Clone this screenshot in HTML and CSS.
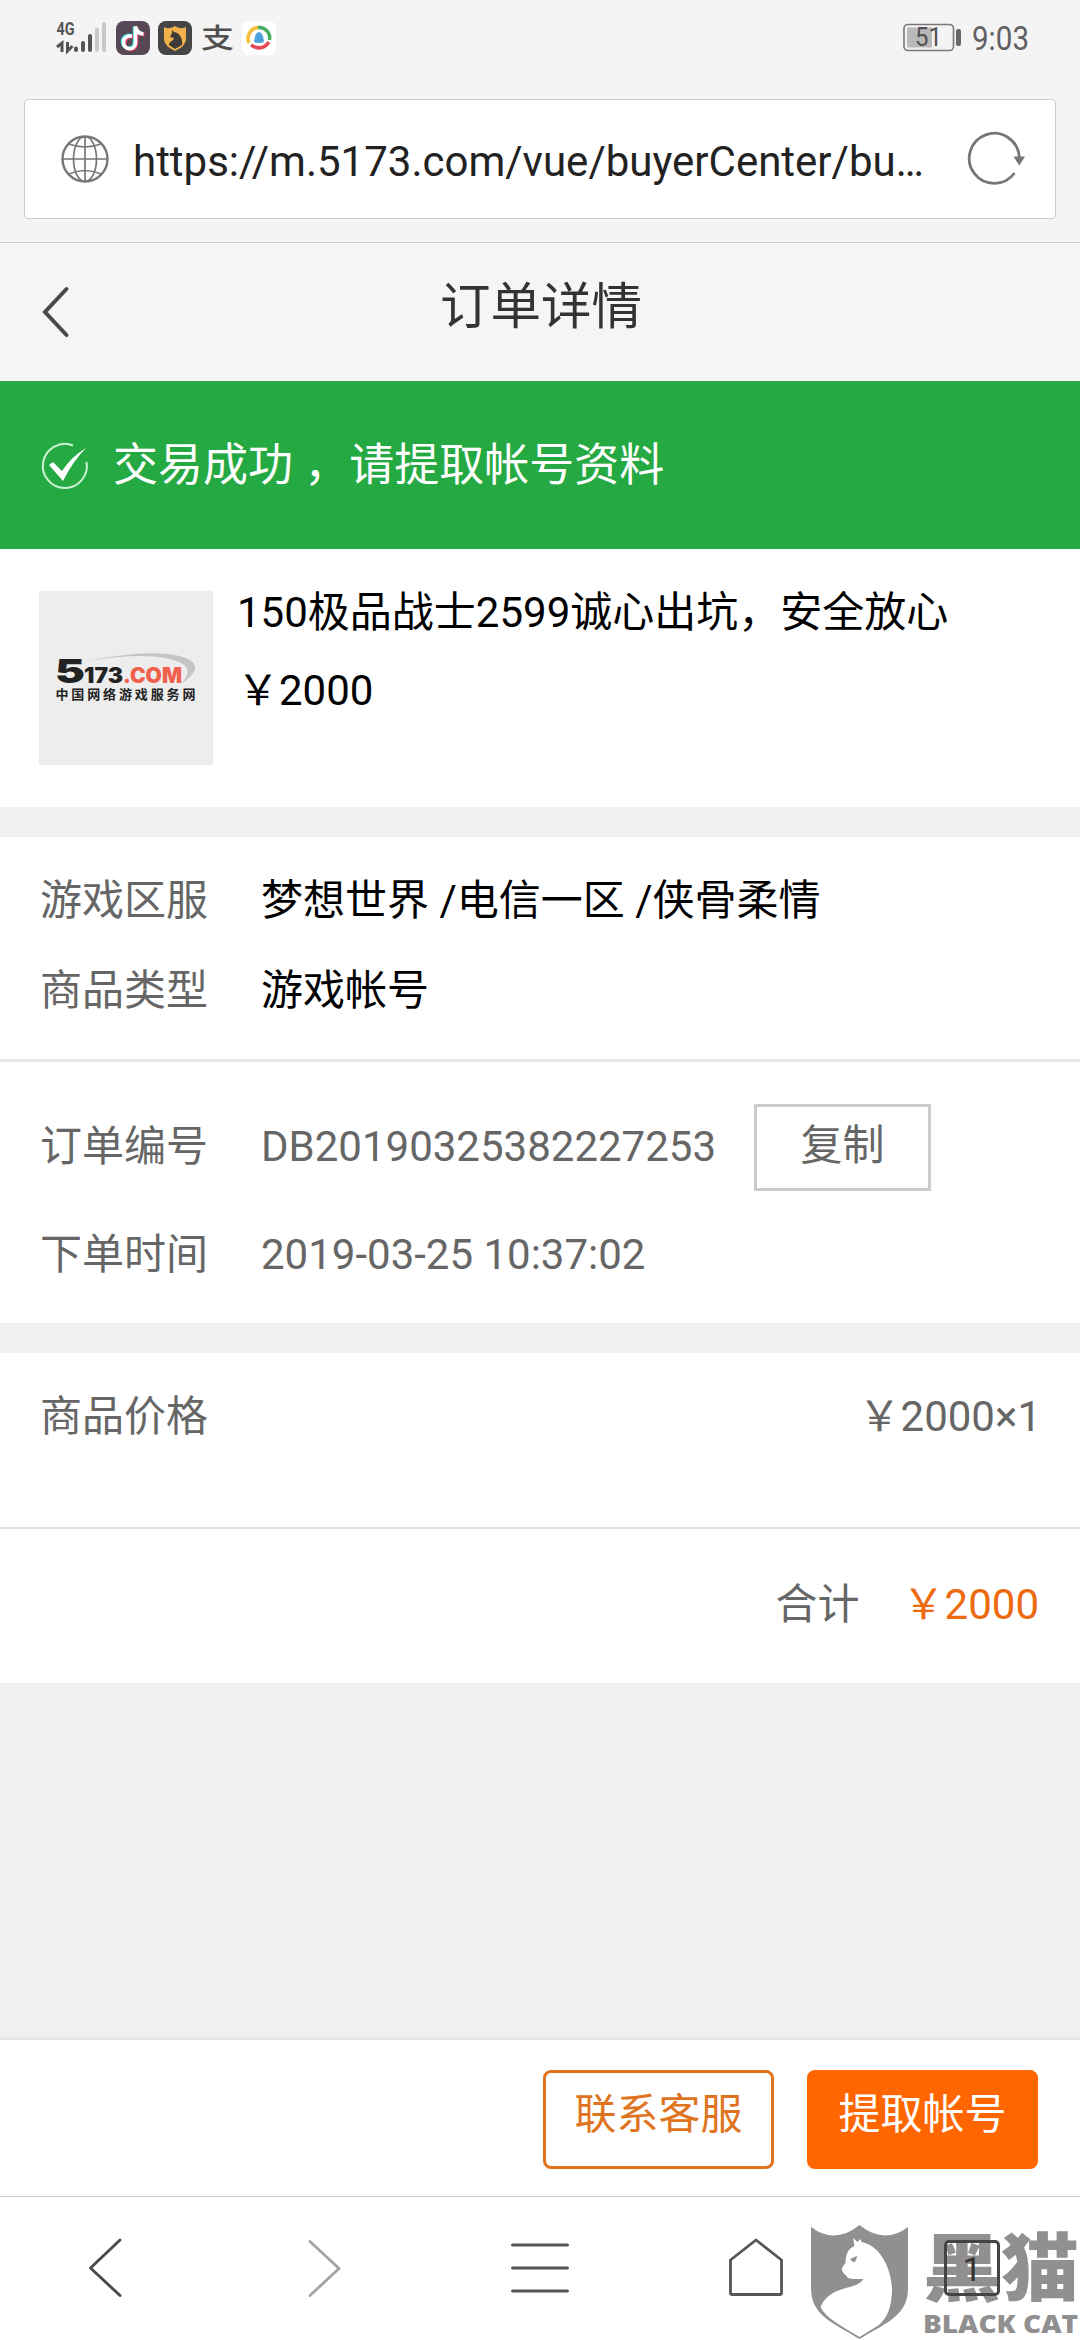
FILE: index.html
```html
<!DOCTYPE html>
<html lang="zh-CN">
<head>
<meta charset="utf-8">
<title>订单详情</title>
<link rel="stylesheet" href="styles.css">
</head>
<body>
<div class="screen">
  <div class="status">
    <div class="status-left">
      <svg class="signal" width="52" height="34" viewBox="56 21 52 34">
        <text x="56.500" y="35" class="net" textLength="18" lengthAdjust="spacingAndGlyphs">4G</text>
        <g fill="none" stroke="#555" stroke-width="3"><path d="M57 47l5-4v9M67.500 42v9l5-5"/></g>
        <g stroke-width="4" stroke-linecap="round"><path stroke="#555" d="M76 48.500v1.500M83 43v7M90 36v14"/><path stroke="#c8c8c8" d="M97 29.500v20.500M104 24v26"/></g>
      </svg>
      <svg class="app" viewBox="0 0 34 34"><rect width="34" height="34" rx="8" fill="#574855"/><g fill="none" stroke-width="3.600"><path stroke="#38dfe2" d="M15 14.500c-5-1-8.500 2-8.500 6s3 6.500 6 6.500 6-2 6-6V5.500c1 4.500 3.500 6.500 8 6.800"/><path stroke="#f0406a" d="M17 16c-5-1-8.500 2-8.500 6s3 6.500 6 6.500 6-2 6-6V7c1 4.500 3.500 6.500 8 6.800"/><path stroke="#fff" d="M16 15.200c-5-1-8.500 2-8.500 6s3 6.500 6 6.500 6-2 6-6V5.500c1 4.500 3.500 7.300 8 7.500"/></g></svg>
      <svg class="app" viewBox="0 0 34 34"><rect width="34" height="34" rx="8" fill="#454545"/><path fill="#f2b04a" d="M6 6q5 3 11-1 6 4 11 1v12q0 7-11 12Q6 25 6 18z"/><path fill="#3d3a38" d="M14 9l2 2c6 1 9 7 8 13l-7 4-6-4c0-4 5-4 5-7l-4-1 2-4z"/></svg>
      <svg class="pay" width="34" height="34" viewBox="0 0 34 34"><text x="1" y="27" class="zhi" textLength="33" lengthAdjust="spacingAndGlyphs">支</text></svg>
      <svg class="app" viewBox="0 0 34 34"><rect width="34" height="34" rx="7" fill="#fff"/><g fill="none" stroke-width="3.500"><path stroke="#f5bf38" d="M7 22A11 11 0 0 1 16 6.500"/><path stroke="#48ad5c" d="M16 6.500A10.500 10.500 0 0 1 27.500 19"/><path stroke="#e64857" d="M27 21Q20 31 9 24"/></g><path fill="#4aa3dc" d="M12 21q1-10 5-10t5 10q-5 2-10 0z"/></svg>
    </div>
    <svg class="status-right" width="128" height="34" viewBox="900 20 128 34">
      <rect x="903" y="24.500" width="49.500" height="26" rx="4" fill="none" stroke="#777" stroke-width="1.600"/>
      <rect x="906" y="27.500" width="25" height="20" fill="#b9b9b9"/>
      <rect x="955" y="29" width="5" height="17" rx="2" fill="#666"/>
      <text class="pct" x="914" y="46" textLength="27" lengthAdjust="spacingAndGlyphs">51</text>
      <text class="clock" x="971" y="50" textLength="57" lengthAdjust="spacingAndGlyphs">9:03</text>
    </svg>
  </div>
  <div class="address">
    <div class="urlbox">
      <svg width="48" height="48" viewBox="0 0 48 48" fill="none" stroke="#777" stroke-width="1.700"><circle cx="24" cy="24" r="22.500" stroke-width="2.400"/><ellipse cx="24" cy="24" rx="11.500" ry="22.500"/><path d="M24 1.500v45M1.500 24h45M8 9q16 6 32 0M8 39q16-7 32 0"/></svg>
      <span class="url">https://m.5173.com/vue/buyerCenter/bu…</span>
      <svg class="reload" width="58" height="56" viewBox="0 0 58 56"><path d="M46.500 42A25 25 0 1 1 51.200 26" fill="none" stroke="#777" stroke-width="2.800"/><path d="M45.500 25.500h11.500l-5.700 9z" fill="#777"/></svg>
    </div>
  </div>
  <header class="titlebar">
    <svg class="back" width="30" height="52" viewBox="0 0 30 52"><path d="M25.500 3L4 26l21.500 23" fill="none" stroke="#4a4a4a" stroke-width="4" stroke-linecap="round"/></svg>
    <h1>订单详情</h1>
  </header>
  <div class="success">
    <svg width="48" height="48" viewBox="0 0 48 48"><g fill="none" stroke="#cdf3d2" stroke-width="2"><path d="M32 3.500A22 22 0 1 0 45.500 20"/></g><path fill="#fff" d="M8 23l4-3 9 9Q31 14 45 6 32 19 22 39z"/></svg>
    <span>交易成功 ，请提取帐号资料</span>
  </div>
  <section class="product">
    <svg class="thumb" width="174" height="174" viewBox="0 0 174 174">
      <rect width="174" height="174" fill="#ededed"/>
      <path fill="#c5c5c5" d="M48 70Q98 60 128 63c33 4 36 15 14 30 13-14 6-22-16-26q-28-5-78 3z"/>
      <text x="16" y="92" class="brand five" textLength="30" lengthAdjust="spacingAndGlyphs">5</text>
      <text x="45" y="92" class="brand" textLength="39" lengthAdjust="spacingAndGlyphs">173</text>
      <text x="84" y="92" class="brand com" textLength="59" lengthAdjust="spacingAndGlyphs">.COM</text>
      <text x="16.500" y="107.500" class="tagline" textLength="140">中国网络游戏服务网</text>
    </svg>
    <div class="product-text"><div>150极品战士2599诚心出坑，安全放心</div><div>￥2000</div></div>
  </section>
  <section class="game">
    <div class="row"><span class="label">游戏区服</span><span class="strong">梦想世界 /电信一区 /侠骨柔情</span></div>
    <div class="row"><span class="label">商品类型</span><span class="strong">游戏帐号</span></div>
  </section>
  <section class="order">
    <div class="row number"><span class="label">订单编号</span><span>DB20190325382227253</span><button class="copy">复制</button></div>
    <div class="row"><span class="label">下单时间</span><span>2019-03-25 10:37:02</span></div>
  </section>
  <section class="price"><span>商品价格</span><span>￥2000×1</span></section>
  <section class="total"><span>合计</span><span class="amount">￥2000</span></section>
  <div class="actions"><button class="contact">联系客服</button><button class="extract">提取帐号</button></div>
  <nav class="nav">
    <span class="cell"><svg width="56" height="64" viewBox="0 0 56 64"><path d="M40 4L10.500 32L40 59.500" fill="none" stroke="#4a4a4a" stroke-width="2.900" stroke-linecap="round" stroke-linejoin="round"/></svg></span>
    <span class="cell"><svg width="56" height="64" viewBox="0 0 56 64"><path d="M14 5.500L43 32.500L14 59.500" fill="none" stroke="#a3a3a3" stroke-width="2.800" stroke-linecap="round" stroke-linejoin="round"/></svg></span>
    <span class="cell"><svg width="60" height="64" viewBox="0 0 60 64"><path d="M2.500 9h55M2.500 32h55M2.500 55h55" stroke="#555" stroke-width="3" stroke-linecap="round"/></svg></span>
    <span class="cell"><svg width="58" height="64" viewBox="0 0 58 64"><path d="M3.500 24L29 4l25.500 20v33.500q0 1-1 1h-49q-1 0-1-1z" fill="none" stroke="#555" stroke-width="2.800" stroke-linejoin="round"/></svg></span>
    <span class="cell"><span class="tabs">1</span></span>
    <svg class="watermark" width="270" height="120" viewBox="810 2220 270 120">
      <path fill="#918f90" d="M811 2227q24 18 48.500-2 25 20 48.500 2v61c0 27-20 34-48.500 51-28-17-48.500-24-48.500-51z"/>
      <path fill="#fff" d="M853 2238l4.500 4 3-3 1 3c21 4 31 31 30.500 50-1 17-5 26-13 33l-19.500 12c-18-11-34-19-39-30 10-23 36-16 43-28-8 0-15 1-17-3-6-5-6-7-1-13 0-12 5-15 9-17z"/>
      <path fill="#918f90" d="M850 2259l7-3q-1 7-4 6z"/>
      <text class="wm-cn" x="923" y="2295" textLength="156" lengthAdjust="spacingAndGlyphs">黑猫</text>
      <text class="wm-en" x="923" y="2333" textLength="155" lengthAdjust="spacingAndGlyphs">BLACK CAT</text>
    </svg>
  </nav>
</div>
</body>
</html>
```
FILE: styles.css
```css
* { box-sizing: border-box; }
body { margin: 0; background: #f0f0f0; }
.screen {
  width: 1080px; height: 2340px; overflow: hidden;
  display: flex; flex-direction: column;
  font-family: Roboto, "Noto Sans CJK SC", sans-serif;
  font-size: 42px; line-height: 90px; color: #666; background: #f0f0f0;
}
.screen > * { flex-shrink: 0; }
svg { display: block; flex-shrink: 0; overflow: visible; }
button { font: inherit; padding: 0; background: #fff; }
section { background: #fff; }

.status {
  height: 80px; padding: 21px 51px 0 56px; background: #f4f4f4;
  display: flex; justify-content: space-between; align-items: flex-start;
}
.status-left { display: flex; gap: 8px; }
.status-right { margin-top: -1px; }
.app { width: 34px; height: 34px; }
.net { font-size: 18px; font-weight: 700; fill: #555; }
.zhi { font-size: 27px; font-weight: 500; fill: #505050; }
.pct { font-size: 25px; fill: #505050; }
.clock { font-size: 34px; fill: #606060; }

.address { height: 163px; padding: 19px 24px 0; background: #f4f4f4; border-bottom: 1px solid #ccc; }
.urlbox {
  height: 120px; padding: 0 29px 0 36px; background: #fff;
  border: 1px solid #ccc; border-radius: 4px;
  display: flex; align-items: center;
}
.url { margin-left: 24px; padding-top: 5px; color: #222; white-space: nowrap; flex: 1; }

.titlebar { height: 138px; padding: 0 39px; background: #f5f5f5; display: flex; align-items: flex-start; }
.back { margin: 43px 0 0 2px; }
h1 { flex: 1; margin: 0 30px 0 0; text-align: center; font-size: 50.500px; font-weight: 400; line-height: 127px; color: #333; }

.success {
  height: 168px; padding: 1px 39px 0 41px; background: #25a942; color: #fff;
  display: flex; align-items: center; gap: 24px; font-size: 45px;
}

.product { height: 258px; padding: 25px 39px 0; display: flex; color: #000; line-height: 78px; }
.thumb { margin-top: 17px; }
.product-text { margin-left: 24px; }
.brand { font-family: Inter, sans-serif; font-size: 21px; font-weight: 900; fill: #222; }
.five { font-size: 33px; }
.com { fill: #f0604d; }
.tagline { font-size: 13px; font-weight: 700; fill: #222; }

.game { margin-top: 30px; height: 225px; padding: 19px 39px 0 40px; border-bottom: 3px solid #e6e6e6; }
.row { display: flex; height: 90px; }
.label { width: 221px; }
.strong { color: #000; }
.order { height: 261px; padding: 42px 39px 0 40px; }
.number { height: 87px; line-height: 86px; margin-bottom: 19px; }
.copy { width: 177px; height: 87px; margin-left: 38px; border: 3px solid #ccc; color: #666; line-height: 78px; padding-bottom: 3px; }
.price {
  margin-top: 30px; height: 176px; padding: 19px 39px 0 40px; border-bottom: 2px solid #e4e4e4;
  display: flex; justify-content: space-between;
}
.total { height: 154px; padding: 31px 41px 0; display: flex; justify-content: flex-end; gap: 43px; }
.amount { color: #ed6a10; }

.actions {
  margin-top: auto; height: 159px; padding-top: 30px; padding-right: 42px;
  background: #fff; border-top: 3px solid #e6e6e6;
  display: flex; justify-content: flex-end; gap: 33px;
}
.actions button { width: 231px; height: 99px; border-radius: 8px; line-height: 84px; padding-bottom: 9px; }
.contact { border: 3px solid #df7420; color: #df7420; }
.extract { border: 3px solid #ff6600; background: #ff6600; color: #fff; }

.nav { position: relative; height: 144px; background: #fff; border-top: 1px solid #ccc; display: flex; }
.cell { flex: 1; display: flex; justify-content: center; align-items: flex-start; padding-top: 39px; }
.tabs {
  position: relative; z-index: 2; width: 56px; height: 56px; margin-top: 4px;
  border: 3px solid #444; border-radius: 5px; text-align: center;
  font-size: 34px; line-height: 53px; color: #333;
}
.watermark { position: absolute; left: 810px; top: 23px; }
.wm-cn { font-family: "Noto Sans CJK SC", sans-serif; font-size: 74px; font-weight: 900; fill: #918f90; }
.wm-en { font-family: "Open Sans", sans-serif; font-size: 24px; font-weight: 800; fill: #918f90; }
```
